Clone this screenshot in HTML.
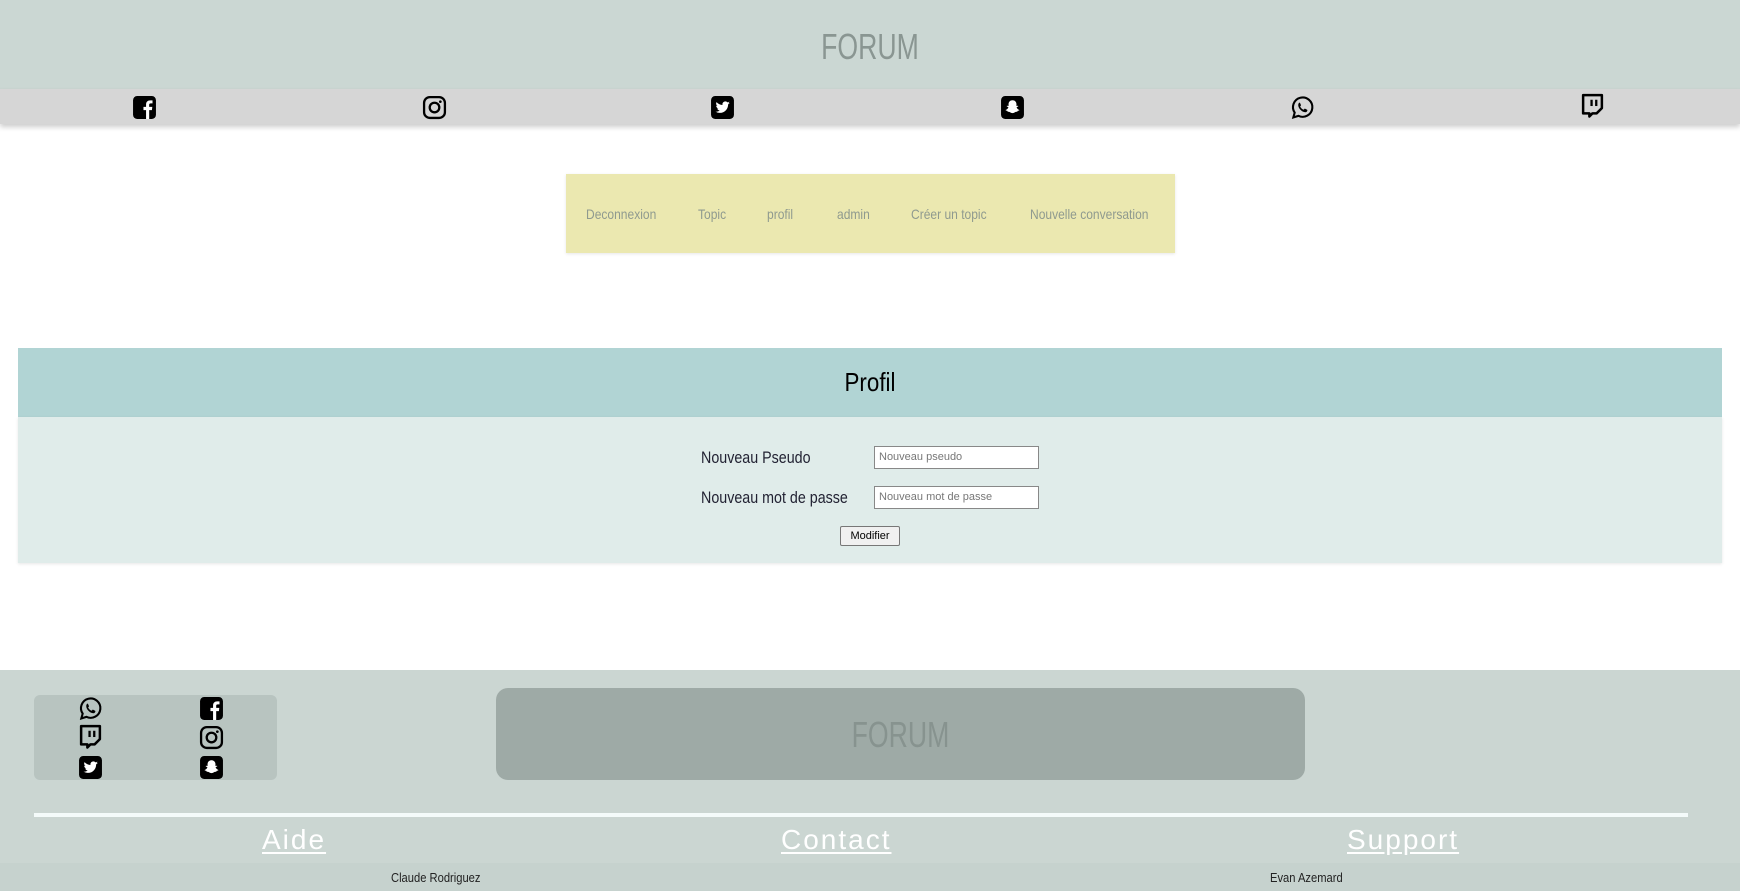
<!DOCTYPE html>
<html><head><meta charset="utf-8"><style>
*{margin:0;padding:0;box-sizing:border-box}
body{width:1740px;height:891px;overflow:hidden;background:#fff;font-family:"Liberation Sans",sans-serif;position:relative}
.abs{position:absolute}
.sx{transform:scaleX(.86);transform-origin:left top;white-space:nowrap}
svg.i{position:absolute;width:25px;height:25px}
.lk span{text-decoration:underline;text-underline-offset:3px}
</style></head><body>
<svg width="0" height="0" style="position:absolute">
<defs>
<symbol id="fb" viewBox="0 0 24 24"><rect x="1" y="1" width="22" height="22" rx="4" fill="#000"/><path d="M16.5 23V14.5h2.6l.4-3.1h-3V9.5c0-.9.3-1.5 1.6-1.5h1.6V5.2c-.3 0-1.2-.1-2.3-.1-2.3 0-3.9 1.4-3.9 4v2.3H11v3.1h2.5V23z" fill="#fff"/></symbol>
<symbol id="ig" viewBox="0 0 24 24"><rect x="2" y="2" width="20" height="20" rx="5.5" fill="none" stroke="#000" stroke-width="2.2"/><circle cx="12" cy="12" r="4.6" fill="none" stroke="#000" stroke-width="2.2"/><circle cx="17.6" cy="6.4" r="1.3" fill="#000"/></symbol>
<symbol id="tw" viewBox="0 0 24 24"><rect x="1" y="1" width="22" height="22" rx="4" fill="#000"/><path d="M19 7.5c-.5.2-1 .4-1.6.4.6-.3 1-.9 1.2-1.5-.5.3-1.1.5-1.8.7a2.8 2.8 0 0 0-4.8 2.5C9.7 9.5 7.7 8.4 6.3 6.8c-.8 1.300-.3 2.9.9 3.7-.5 0-.9-.1-1.3-.3 0 1.4 1 2.5 2.2 2.8-.4.1-.9.1-1.300 0 .4 1.1 1.4 1.9 2.6 1.9A5.6 5.6 0 0 1 5.3 16c1.2.8 2.7 1.2 4.2 1.2 5.1 0 8-4.3 7.9-8.2.6-.4 1.1-.9 1.6-1.5z" fill="#fff"/></symbol>
<symbol id="sc" viewBox="0 0 24 24"><rect x="1" y="1" width="22" height="22" rx="4" fill="#000"/><path d="M12 5c2.3 0 3.8 1.7 3.8 3.8v1.8l1.3-.3c.4 0 .6.4.2.7l-1.4.7c.5 1.3 1.5 2.3 2.8 2.7-.2.6-1.2.7-1.8.8l-.3.9c-.8-.1-1.6 0-2.3.5-.7.5-1.4.8-2.3.8s-1.6-.3-2.3-.8c-.7-.5-1.5-.6-2.3-.5l-.3-.9c-.6-.1-1.6-.2-1.8-.8 1.3-.4 2.300-1.4 2.8-2.7l-1.4-.7c-.4-.3-.2-.7.2-.7l1.3.3V8.8C8.2 6.7 9.7 5 12 5z" fill="#fff"/></symbol>
<symbol id="wa" viewBox="0 0 24 24"><path d="M3.2 21.5l1.3-4.6A9.3 9.3 0 1 1 8.1 20z" fill="none" stroke="#000" stroke-width="2"/><path d="M9 7.3c.3 0 .5 0 .7.5l.8 1.8c.1.3 0 .5-.2.7l-.6.7c.7 1.4 1.9 2.5 3.4 3.2l.8-.9c.2-.2.4-.3.7-.1l1.8.9c.3.1.3.4.3.6-.1 1-1 1.8-2 1.8-3 0-6.8-3.6-6.8-6.8 0-1.2.6-2.3 1.1-2.4z" fill="#000"/></symbol>
<symbol id="tt" viewBox="0 0 24 24"><path d="M3 2h18v12.5L16 19.5h-4l-3 3v-3H3z" fill="none" stroke="#000" stroke-width="2.4" stroke-linejoin="round"/><rect x="10" y="6.5" width="2.2" height="6" fill="#000"/><rect x="14.5" y="6.5" width="2.2" height="6" fill="#000"/></symbol>
</defs></svg>

<div class="abs" style="left:0;top:0;width:1740px;height:89px;background:#cbd7d3"></div>
<div class="abs" style="left:0;top:26px;width:1740px;text-align:center;font-size:36px;color:#8a9692;transform:scaleX(.74);">FORUM</div>
<div class="abs" style="left:0;top:89px;width:1740px;height:35px;background:#d6d6d6;box-shadow:0 3px 5px rgba(0,0,0,.2)"></div>
<svg class="i" style="left:132px;top:95px"><use href="#fb"/></svg>
<svg class="i" style="left:422px;top:95px"><use href="#ig"/></svg>
<svg class="i" style="left:710px;top:95px"><use href="#tw"/></svg>
<svg class="i" style="left:1000px;top:95px"><use href="#sc"/></svg>
<svg class="i" style="left:1290px;top:95px"><use href="#wa"/></svg>
<svg class="i" style="left:1580px;top:93px"><use href="#tt"/></svg>

<div class="abs" style="left:566px;top:174px;width:609px;height:79px;background:#ebe8b0;box-shadow:0 1px 3px rgba(0,0,0,.1)"></div>
<div class="abs" style="top:206px;left:0;width:1740px;font-size:14px;color:#8f9a8f;height:18px">
<span class="abs sx" style="left:586px">Deconnexion</span>
<span class="abs sx" style="left:698px">Topic</span>
<span class="abs sx" style="left:767px">profil</span>
<span class="abs sx" style="left:837px">admin</span>
<span class="abs sx" style="left:911px">Créer un topic</span>
<span class="abs sx" style="left:1030px">Nouvelle conversation</span>
</div>

<div class="abs" style="left:18px;top:348px;width:1704px;height:69px;background:#b1d4d4"></div>
<div class="abs" style="left:0;top:367px;width:1740px;text-align:center;font-size:26px;color:#000;transform:scaleX(.86)">Profil</div>
<div class="abs" style="left:18px;top:417px;width:1704px;height:146px;background:#e0ecea;box-shadow:0 1px 3px rgba(0,0,0,.1)"></div>
<div class="abs sx" style="left:701px;top:448px;font-size:17px;color:#223;transform:scaleX(.84)">Nouveau Pseudo</div>
<div class="abs sx" style="left:701px;top:488px;font-size:17px;color:#223;transform:scaleX(.84)">Nouveau mot de passe</div>
<div class="abs" style="left:874px;top:446px;width:165px;height:23px;background:#fff;border:1px solid #888;font-size:11px;color:#777;padding:4px">Nouveau pseudo</div>
<div class="abs" style="left:874px;top:486px;width:165px;height:23px;background:#fff;border:1px solid #888;font-size:11px;color:#777;padding:4px">Nouveau mot de passe</div>
<div class="abs" style="left:840px;top:526px;width:60px;height:20px;background:#f0f0f0;border:1px solid #777;font-size:11px;text-align:center;line-height:18px;border-radius:2px">Modifier</div>

<div class="abs" style="left:0;top:670px;width:1740px;height:221px;background:#cbd6d2"></div>
<div class="abs" style="left:0;top:863px;width:1740px;height:28px;background:#c6d2ce"></div>
<div class="abs" style="left:34px;top:695px;width:243px;height:85px;background:#b8c4c0;border-radius:6px"></div>
<svg class="i" style="left:78px;top:696px"><use href="#wa"/></svg>
<svg class="i" style="left:199px;top:696px"><use href="#fb"/></svg>
<svg class="i" style="left:78px;top:724px"><use href="#tt"/></svg>
<svg class="i" style="left:199px;top:725px"><use href="#ig"/></svg>
<svg class="i" style="left:78px;top:755px"><use href="#tw"/></svg>
<svg class="i" style="left:199px;top:755px"><use href="#sc"/></svg>
<div class="abs" style="left:496px;top:688px;width:809px;height:92px;background:#9eaaa6;border-radius:12px"></div>
<div class="abs" style="left:496px;top:714px;width:809px;text-align:center;font-size:36px;color:#87938f;transform:scaleX(.74)">FORUM</div>
<div class="abs" style="left:34px;top:813px;width:1654px;height:4px;background:#f4fbfa"></div>
<div class="abs lk" style="top:824px;left:0;width:1740px;font-size:28px;color:#fff;letter-spacing:2px">
<span class="abs" style="left:262px">Aide</span>
<span class="abs" style="left:781px">Contact</span>
<span class="abs" style="left:1347px">Support</span>
</div>
<div class="abs sx" style="left:391px;top:870px;font-size:13px;color:#222">Claude Rodriguez</div>
<div class="abs sx" style="left:1270px;top:870px;font-size:13px;color:#222">Evan Azemard</div>
</body></html>
